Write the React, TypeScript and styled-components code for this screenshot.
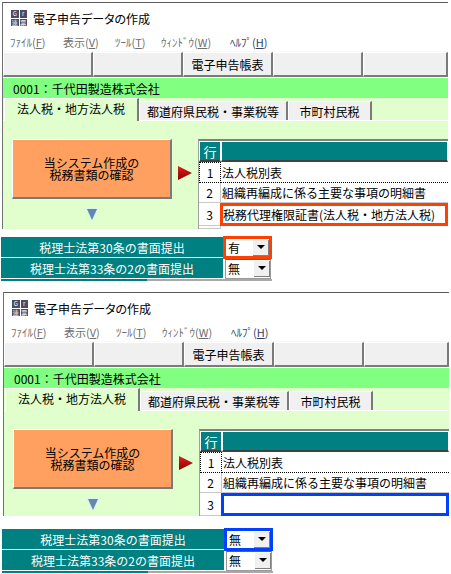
import styled, { createGlobalStyle } from "styled-components";

const GlobalStyle = createGlobalStyle`
  html, body {
    margin: 0;
    padding: 0;
    background: #ffffff;
    font-family: "Noto Sans CJK JP", "Noto Sans", sans-serif;
    color: #000000;
  }
`;

const Page = styled.div`
  width: 451px;
  height: 574px;
  padding-top: 2px;
  box-sizing: border-box;
  overflow: hidden;
  display: flex;
  flex-direction: column;
  gap: 11px;
`;

const Capture = styled.section<{ $indent: number }>`
  margin-left: ${(p) => p.$indent}px;
  width: 446px;
`;

const Frame = styled.div`
  border-top: 1px solid #5a5a5a;
  border-left: 1px solid #707070;
`;

const TitleBar = styled.div`
  height: 30px;
  display: flex;
  align-items: center;
  padding-left: 8px;
  gap: 6px;
  font-size: 12px;
  font-feature-settings: "palt";
`;

const AppIcon = styled.div`
  width: 16px;
  height: 16px;
  display: grid;
  grid-template-columns: 1fr 1fr;
  grid-template-rows: 1fr 1fr;
  gap: 1px;
`;

const AppIconCell = styled.span`
  background: #4c4c66;
  color: #ffffff;
  font-size: 6px;
  line-height: 7px;
  text-align: center;
  overflow: hidden;
`;

const MenuBar = styled.nav`
  height: 18px;
  display: flex;
  align-items: center;
  font-size: 11px;
  padding-left: 7px;
`;

const MenuItem = styled.span<{ $width: number; $active?: boolean }>`
  width: ${(p) => p.$width}px;
  color: ${(p) => (p.$active ? "#2f3f66" : "#6e6e6e")};
  white-space: nowrap;
  u {
    text-underline-offset: 1px;
  }
`;

const Toolbar = styled.div`
  height: 26px;
  padding-top: 1px;
  box-sizing: border-box;
  display: grid;
  grid-template-columns: 90px 90px 90px 90px 1fr;
  background: #f8f8f8;
  margin-bottom: 1px;
`;

const ToolButton = styled.div`
  background: #f0f0f0;
  border-top: 1px solid #ffffff;
  border-left: 1px solid #ffffff;
  border-right: 2px solid #7a7a7a;
  border-bottom: 2px solid #7a7a7a;
  box-sizing: border-box;
  display: flex;
  align-items: center;
  justify-content: center;
  font-size: 12px;
  white-space: nowrap;
`;

const CompanyBar = styled.div`
  height: 20px;
  background: #80ff80;
  display: flex;
  align-items: center;
  padding-left: 10px;
  font-size: 12px;
`;

const TabStrip = styled.div`
  height: 23px;
  background: #e0ffcc;
  display: flex;
  align-items: flex-end;
  padding-left: 1px;
  border-bottom: 1px solid #ffffff;
  box-sizing: border-box;
`;

const Tab = styled.div<{ $active?: boolean; $width: number }>`
  width: ${(p) => p.$width}px;
  height: ${(p) => (p.$active ? 23 : 19)}px;
  margin-bottom: ${(p) => (p.$active ? -1 : 0)}px;
  padding-bottom: ${(p) => (p.$active ? 3 : 0)}px;
  box-sizing: border-box;
  background: ${(p) => (p.$active ? "#e0ffcc" : "#f0f0f0")};
  border-top: 1px solid #ffffff;
  border-left: 1px solid #ffffff;
  border-right: 2px solid #7a7a7a;
  display: flex;
  align-items: center;
  justify-content: center;
  font-size: 12px;
  white-space: nowrap;
  z-index: 1;
`;

const Body = styled.div<{ $height: number }>`
  height: ${(p) => p.$height}px;
  background: #e0ffcc;
  display: flex;
  padding: 18px 0 0 9px;
  box-sizing: border-box;
  overflow: hidden;
`;

const LeftColumn = styled.div`
  width: 160px;
  display: flex;
  flex-direction: column;
  align-items: center;
  gap: 8px;
`;

const ConfirmButton = styled.div`
  width: 160px;
  height: 60px;
  box-sizing: border-box;
  background: #ffa060;
  border-top: 1px solid #ffffff;
  border-left: 1px solid #ffffff;
  border-right: 2px solid #7a7a7a;
  border-bottom: 2px solid #7a7a7a;
  display: flex;
  align-items: center;
  justify-content: center;
  text-align: center;
  font-size: 12px;
  line-height: 12px;
`;

const ArrowSlot = styled.div`
  width: 26px;
  padding: 23px 0 0 5px;
  box-sizing: border-box;
`;

const Grid = styled.div`
  flex: 1;
  background: #ffffff;
  border-top: 2px solid #808080;
  border-left: 1px solid #a0a0a0;
  display: grid;
  grid-template-columns: 22px 1fr;
  grid-template-rows: 21px 21px 20px 23px 1fr;
  font-size: 12px;
`;

const HeadCell = styled.div`
  background: #008080;
  color: #ffffff;
  border: 1px solid #ffffff;
  border-bottom: 2px solid #404040;
  display: flex;
  align-items: center;
  justify-content: center;
  font-size: 13px;
`;

const NumCell = styled.div<{ $focus?: boolean }>`
  display: flex;
  align-items: center;
  justify-content: center;
  box-sizing: border-box;
  border: ${(p) => (p.$focus ? "1px dotted #000000" : "none")};
  border-bottom: ${(p) => (p.$focus ? "1px dotted #000000" : "1px solid #c8c8c8")};
  border-right: ${(p) => (p.$focus ? "1px dotted #000000" : "1px solid #c8c8c8")};
`;

const TextCell = styled.div<{ $focus?: boolean; $mark?: string }>`
  display: flex;
  align-items: center;
  box-sizing: border-box;
  padding-left: ${(p) => (p.$mark ? 0 : 1)}px;
  white-space: nowrap;
  overflow: hidden;
  border-bottom: ${(p) => (p.$focus ? "1px dotted #000000" : "1px solid #c8c8c8")};
  ${(p) => (p.$mark ? `border: 3px solid ${p.$mark}; margin-left: -1px;` : "")}
`;

const FormBlock = styled.div<{ $gap: number }>`
  margin-top: ${(p) => p.$gap}px;
  margin-left: -1px;
  width: 271px;
`;

const FormRow = styled.div`
  display: flex;
  align-items: center;
  height: 21px;
`;

const FormLabel = styled.div`
  width: 222px;
  height: 21px;
  box-sizing: border-box;
  background: #008080;
  color: #ffffff;
  border-bottom: 1px solid #ffffff;
  display: flex;
  align-items: center;
  justify-content: center;
  font-size: 12px;
  white-space: nowrap;
`;

const Select = styled.div<{ $mark?: string }>`
  margin-left: ${(p) => (p.$mark ? 0 : 2)}px;
  width: ${(p) => (p.$mark ? 49 : 46)}px;
  height: ${(p) => (p.$mark ? 23 : 20)}px;
  box-sizing: border-box;
  background: #ffffff;
  display: flex;
  align-items: center;
  justify-content: space-between;
  font-size: 12px;
  padding-left: 2px;
  z-index: 1;
  border: ${(p) => (p.$mark ? `3px solid ${p.$mark}` : "1px solid #9a9a9a")};
  border-top-color: ${(p) => p.$mark ?? "#606060"};
`;

const SelectButton = styled.span`
  width: 15px;
  height: 15px;
  background: #f0f0f0;
  border-right: 1px solid #808080;
  border-bottom: 1px solid #808080;
  display: flex;
  align-items: center;
  justify-content: center;
`;

const FormRule = styled.div`
  height: 2px;
  display: grid;
  grid-template-columns: 146px 1fr;
  background: #a8a8a8;
  &::before {
    content: "";
    background: #008080;
  }
`;

const RightArrow = () => (
  <svg width="16" height="16" viewBox="0 0 16 16">
    <defs>
      <linearGradient id="redArrow" x1="0" y1="0" x2="0" y2="1">
        <stop offset="0" stopColor="#e02020" />
        <stop offset="1" stopColor="#8c0000" />
      </linearGradient>
    </defs>
    <path d="M1 1 L15 8 L1 15 Z" fill="url(#redArrow)" />
  </svg>
);

const DownArrow = () => (
  <svg width="16" height="16" viewBox="0 0 16 16">
    <path d="M1 1 H15 L8 15 Z" fill="#d8f4f0" />
    <path d="M3 2 H13 L8 13 Z" fill="#6288ae" />
  </svg>
);

const Caret = () => (
  <svg width="8" height="4" viewBox="0 0 8 4">
    <path d="M0 0 H8 L4 4 Z" fill="#000000" />
  </svg>
);

const menus = [
  { label: "ﾌｧｲﾙ", key: "F", width: 53 },
  { label: "表示", key: "V", width: 52 },
  { label: "ﾂｰﾙ", key: "T", width: 46 },
  { label: "ｳｨﾝﾄﾞｳ", key: "W", width: 69 },
  { label: "ﾍﾙﾌﾟ", key: "H", width: 50, active: true },
];

interface CaptureProps {
  indent: number;
  bodyHeight: number;
  formGap: number;
  mark: string;
  thirdRow: string;
  firstChoice: string;
}

const FilingCapture = ({ indent, bodyHeight, formGap, mark, thirdRow, firstChoice }: CaptureProps) => {
  return (
    <Capture $indent={indent}>
      <Frame>
        <TitleBar>
          <AppIcon>
            <AppIconCell>G</AppIconCell>
            <AppIconCell>r</AppIconCell>
            <AppIconCell>連</AppIconCell>
            <AppIconCell>票</AppIconCell>
          </AppIcon>
          電子申告データの作成
        </TitleBar>
        <MenuBar>
          {menus.map((m) => (
            <MenuItem key={m.key} $width={m.width} $active={m.active}>
              {m.label}(<u>{m.key}</u>)
            </MenuItem>
          ))}
        </MenuBar>
        <Toolbar>
          <ToolButton />
          <ToolButton />
          <ToolButton>電子申告帳表</ToolButton>
          <ToolButton />
          <ToolButton />
        </Toolbar>
        <CompanyBar>0001：千代田製造株式会社</CompanyBar>
        <TabStrip>
          <Tab $active $width={135}>法人税・地方法人税</Tab>
          <Tab $width={149}>都道府県民税・事業税等</Tab>
          <Tab $width={84}>市町村民税</Tab>
        </TabStrip>
        <Body $height={bodyHeight}>
          <LeftColumn>
            <ConfirmButton>
              当システム作成の
              <br />
              税務書類の確認
            </ConfirmButton>
            <DownArrow />
          </LeftColumn>
          <ArrowSlot>
            <RightArrow />
          </ArrowSlot>
          <Grid>
            <HeadCell>行</HeadCell>
            <HeadCell />
            <NumCell $focus>1</NumCell>
            <TextCell $focus>法人税別表</TextCell>
            <NumCell>2</NumCell>
            <TextCell>組織再編成に係る主要な事項の明細書</TextCell>
            <NumCell>3</NumCell>
            <TextCell $mark={mark}>{thirdRow}</TextCell>
            <NumCell />
            <div />
          </Grid>
        </Body>
      </Frame>
      <FormBlock $gap={formGap}>
        <FormRow>
          <FormLabel>税理士法第30条の書面提出</FormLabel>
          <Select $mark={mark}>
            {firstChoice}
            <SelectButton>
              <Caret />
            </SelectButton>
          </Select>
        </FormRow>
        <FormRow>
          <FormLabel>税理士法第33条の2の書面提出</FormLabel>
          <Select>
            無
            <SelectButton>
              <Caret />
            </SelectButton>
          </Select>
        </FormRow>
        <FormRule />
      </FormBlock>
    </Capture>
  );
};

export default function App() {
  return (
    <>
      <GlobalStyle />
      <Page>
        <FilingCapture
          indent={2}
          bodyHeight={108}
          formGap={8}
          mark="#ff4000"
          thirdRow="税務代理権限証書(法人税・地方法人税)"
          firstChoice="有"
        />
        <FilingCapture
          indent={3}
          bodyHeight={105}
          formGap={13}
          mark="#0040ff"
          thirdRow=""
          firstChoice="無"
        />
      </Page>
    </>
  );
}
